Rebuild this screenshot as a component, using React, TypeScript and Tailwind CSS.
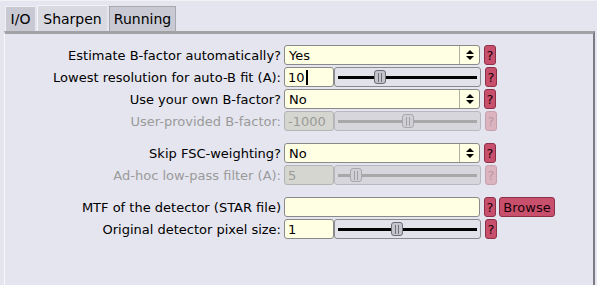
import React from 'react';

const Help = ({ disabled }: { disabled?: boolean }) => (
    <div
        className={`ml-[4px] w-[12px] h-[20px] rounded-[3px] border flex items-center justify-center text-[13px] leading-none ${
            disabled ? 'bg-[#dcb4c0] border-[#c8a0ac] text-[#b89aa4]' : 'bg-[#c8506c] border-[#8c3048] text-[#1a0008]'
        }`}
    >
        ?
    </div>
);

const Select = ({ value }: { value: string }) => (
    <div className="w-[196px] h-[20px] rounded-[3px] border border-[#8a8a8a] bg-[#ffffe4] flex items-center">
        <span className="flex-1 pl-[4px] text-[13px] leading-none">{value}</span>
        <div className="w-[20px] h-full border-l border-[#b0b0a0] flex items-center justify-center">
            <svg width="8" height="12" viewBox="0 0 8 12">
                <path d="M0 5 L4 1 L8 5 Z" fill="#000" />
                <path d="M0 7 L4 11 L8 7 Z" fill="#000" />
            </svg>
        </div>
    </div>
);

const Slider = ({ value, thumb, disabled, cursor }: { value: string; thumb: number; disabled?: boolean; cursor?: boolean }) => (
    <div className="flex">
        <div
            className={`w-[50px] h-[20px] rounded-[3px] border flex items-center pl-[3px] text-[13px] leading-none ${
                disabled ? 'bg-[#d6d6d0] border-[#b4b4b4] text-[#9a9a9a]' : 'bg-[#ffffe4] border-[#8a8a8a] text-black'
            }`}
        >
            {value}
            {cursor && <span className="ml-[1px] w-[2px] h-[15px] bg-black" />}
        </div>
        <div
            className={`relative w-[147px] h-[20px] rounded-[3px] border flex items-center px-[3px] ${
                disabled ? 'bg-[#d6d6dc] border-[#b8b8c0]' : 'bg-[#e2e2ea] border-[#8a8a8a]'
            }`}
        >
            <div className={`w-full h-[3px] ${disabled ? 'bg-[#a8a8a8]' : 'bg-black'}`} />
            <div
                className={`absolute top-[2px] w-[12px] h-[14px] rounded-[3px] border flex justify-center items-center gap-[2px] ${
                    disabled ? 'bg-[#cfcfd4] border-[#a8a8b0]' : 'bg-[#c4c4cc] border-[#6c6c74]'
                }`}
                style={{ left: thumb }}
            >
                <div className={`w-[1px] h-[9px] ${disabled ? 'bg-[#a0a0a8]' : 'bg-[#707078]'}`} />
                <div className={`w-[1px] h-[9px] ${disabled ? 'bg-[#a0a0a8]' : 'bg-[#707078]'}`} />
            </div>
        </div>
    </div>
);

const Row = ({ label, disabled, children }: { label: string; disabled?: boolean; children: React.ReactNode }) => (
    <div className="flex items-center h-[20px] mb-[2px]">
        <div className={`w-[276px] text-right text-[13px] leading-none ${disabled ? 'text-[#9a9a9a]' : 'text-black'}`}>{label}</div>
        <div className="ml-[3px] flex items-center">{children}</div>
    </div>
);

export default function App() {
    return (
        <div className="w-[597px] h-[285px] bg-[#e5e5ef] overflow-hidden" style={{ fontFamily: '"DejaVu Sans", sans-serif' }}>
            <div className="h-[1px] bg-[#f2f2f6]" />
            <div className="flex items-end pl-[5px] pt-[4px] gap-[2px] h-[30px] text-[14px] leading-none">
                <div className="h-[25px] w-[30px] flex items-center justify-center bg-[#c9c9d3] border-t border-l border-[#f0f0f4]">I/O</div>
                <div className="h-[26px] w-[70px] flex items-center justify-center bg-[#d9d9e1] border-t border-l border-[#f4f4f8]">Sharpen</div>
                <div className="h-[25px] w-[67px] flex items-center justify-center bg-[#c9c9d3] border-t border-l border-r border-[#a8a8b0]">Running</div>
            </div>
            <div className="ml-[4px] mr-[2px] h-[260px] border-t-[3px] border-t-[#a2a2a6] border-l border-l-[#f8f8fc] border-r-2 border-r-[#7c7c84] pt-[11px]">
                <Row label="Estimate B-factor automatically?">
                    <Select value="Yes" />
                    <Help />
                </Row>
                <Row label="Lowest resolution for auto-B fit (A):">
                    <Slider value="10" thumb={39} cursor />
                    <Help />
                </Row>
                <Row label="Use your own B-factor?">
                    <Select value="No" />
                    <Help />
                </Row>
                <Row label="User-provided B-factor:" disabled>
                    <Slider value="-1000" thumb={67} disabled />
                    <Help disabled />
                </Row>
                <div className="h-[10px]" />
                <Row label="Skip FSC-weighting?">
                    <Select value="No" />
                    <Help />
                </Row>
                <Row label="Ad-hoc low-pass filter (A):" disabled>
                    <Slider value="5" thumb={15} disabled />
                    <Help disabled />
                </Row>
                <div className="h-[10px]" />
                <Row label="MTF of the detector (STAR file)">
                    <div className="w-[196px] h-[20px] rounded-[3px] border border-[#8a8a8a] bg-[#ffffe4]" />
                    <Help />
                    <div className="ml-[3px] w-[56px] h-[20px] rounded-[3px] border border-[#8c3048] bg-[#c8506c] flex items-center justify-center text-[13px] leading-none text-[#1a0008]">
                        Browse
                    </div>
                </Row>
                <Row label="Original detector pixel size:">
                    <Slider value="1" thumb={56} />
                    <Help />
                </Row>
            </div>
        </div>
    );
}
